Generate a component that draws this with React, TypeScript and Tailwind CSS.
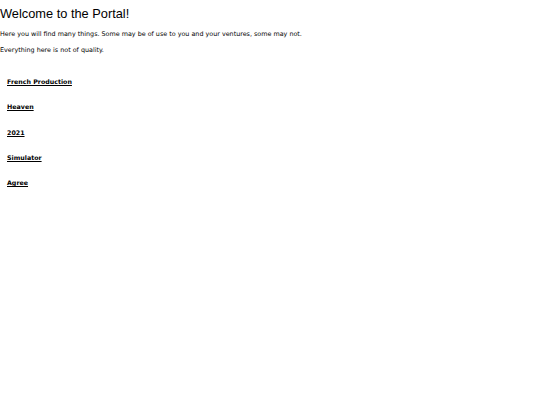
import React from "react";

const links = ["French Production", "Heaven", "2021", "Simulator", "Agree"];

const App: React.FC = () => {
  return (
    <div className="min-h-[405px] bg-white text-black">
      <h1 className="pt-[6px] font-['Liberation_Sans',Arial,sans-serif] text-[12.8px] leading-[15px]">
        Welcome to the Portal!
      </h1>
      <p className="mt-[9px] font-['DejaVu_Sans',Verdana,sans-serif] text-[6.4px] leading-[8px]">
        Here you will find many things. Some may be of use to you and your ventures, some may not.
      </p>
      <p className="mt-[8px] font-['DejaVu_Sans',Verdana,sans-serif] text-[6.4px] leading-[8px]">
        Everything here is not of quality.
      </p>
      <ul className="mt-[24px] flex flex-col gap-[17.3px] pl-[7px] font-['DejaVu_Sans',Verdana,sans-serif] text-[6.3px] leading-[8px] font-bold">
        {links.map((link) => (
          <li key={link}>
            <a href="#" className="underline">
              {link}
            </a>
          </li>
        ))}
      </ul>
    </div>
  );
};

export default App;
